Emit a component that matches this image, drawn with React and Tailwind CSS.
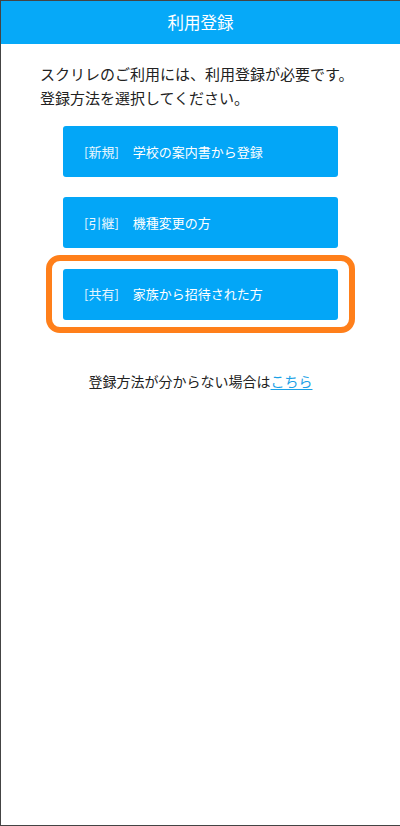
export default function App() {
  const font = { fontFamily: '"Noto Sans CJK JP", "Noto Sans", sans-serif' };
  const options = [
    { tag: '[新規]', label: '学校の案内書から登録' },
    { tag: '[引継]', label: '機種変更の方' },
  ];

  return (
    <div
      className="h-[826px] w-[400px] bg-white border-l border-t border-b border-[#444] border-r-[#999] flex flex-col"
      style={font}
    >
      <header className="h-[43px] bg-[#06a9f8] flex items-center justify-center text-white text-[16.5px]">
        利用登録
      </header>

      <p className="mt-[18px] px-[39px] text-[15px] leading-[24px] text-[#222]">
        スクリレのご利用には、利用登録が必要です。
        <br />
        登録方法を選択してください。
      </p>

      <div className="mt-[16px] flex flex-col items-center gap-5">
        {options.map((o) => (
          <button
            key={o.tag}
            className="w-[275px] h-[51px] rounded-[3px] bg-[#03a6f7] text-white text-[13px] flex items-center pl-[21px]"
          >
            <span className="text-white/90">{o.tag}</span>
            <span className="ml-[14px]">{o.label}</span>
          </button>
        ))}
      </div>

      <div className="mt-[7px] mx-auto w-[309px] h-[78px] rounded-[14px] border-[6px] border-[#ff7f1a] flex items-center justify-center">
        <button className="w-[275px] h-[51px] rounded-[3px] bg-[#03a6f7] text-white text-[13px] flex items-center pl-[21px]">
          <span className="text-white/90">[共有]</span>
          <span className="ml-[14px]">家族から招待された方</span>
        </button>
      </div>

      <p className="mt-[38px] text-center text-[14px] text-[#222]">
        登録方法が分からない場合は
        <a className="text-[#1ba1e6] underline underline-offset-2">こちら</a>
      </p>
    </div>
  );
}
